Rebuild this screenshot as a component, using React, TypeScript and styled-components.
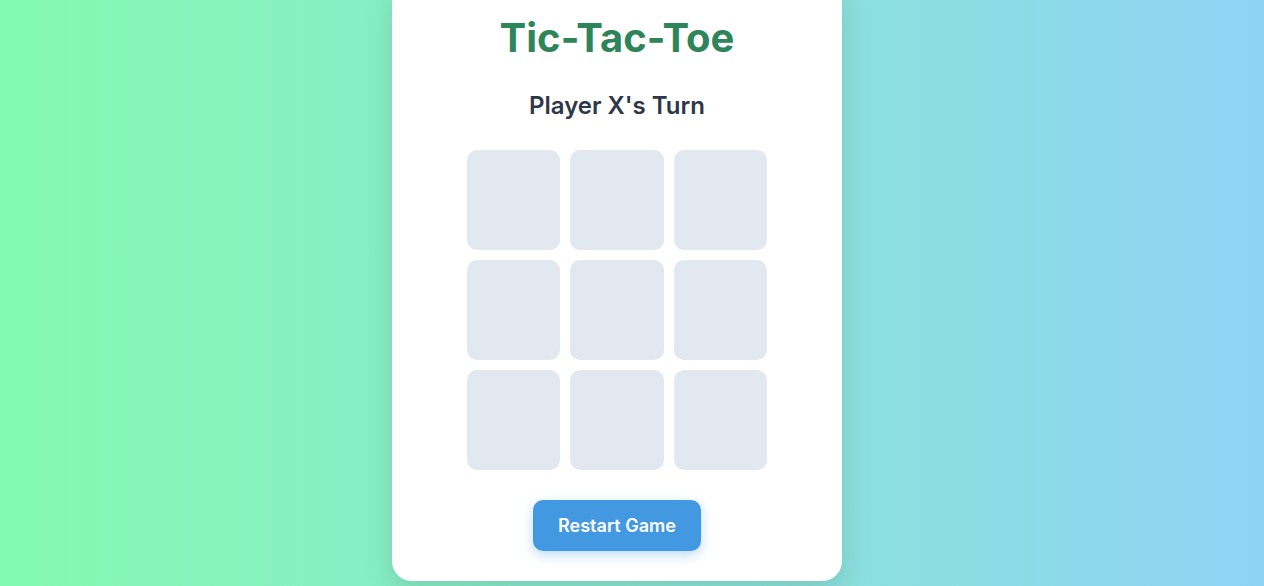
import React, { useState } from "react";
import styled, { createGlobalStyle } from "styled-components";

const GlobalStyle = createGlobalStyle`
    * {
        box-sizing: border-box;
    }

    body {
        margin: 0;
        font-family: Inter, "Noto Sans", "Liberation Sans", sans-serif;
        overflow: hidden;
    }
`;

const Page = styled.div`
    height: 100vh;
    display: flex;
    justify-content: center;
    align-items: flex-end;
    padding: 0 30px 5px 0;
    background: linear-gradient(to right, #84fab0, #8fd3f4);
`;

const Card = styled.div`
    flex-shrink: 0;
    width: 450px;
    background: #ffffff;
    border-radius: 20px;
    padding: 30px 0 30px;
    box-shadow: 0 10px 30px rgba(0, 0, 0, 0.12);
    display: flex;
    flex-direction: column;
    align-items: center;
    gap: 29px;
`;

const Title = styled.h1`
    margin: 0;
    font-size: 40px;
    line-height: 48px;
    font-weight: 700;
    color: #2f855a;
`;

const Status = styled.h2`
    margin: 0;
    font-size: 24px;
    line-height: 30px;
    font-weight: 600;
    color: #2d3748;
`;

const Board = styled.div`
    display: grid;
    grid-template-columns: repeat(3, 1fr);
    grid-auto-rows: 100px;
    gap: 10px;
    width: 300px;
`;

const Cell = styled.button<{ $mark: string | null }>`
    border: none;
    border-radius: 10px;
    background: #e2e8f0;
    font-family: inherit;
    font-size: 48px;
    font-weight: 700;
    color: ${(p) => (p.$mark === "X" ? "#e53e3e" : "#3182ce")};
    cursor: pointer;
    padding: 0;
`;

const RestartButton = styled.button`
    margin-top: 1px;
    border: none;
    border-radius: 10px;
    padding: 15px 25px;
    background: #4299e1;
    color: #ffffff;
    font-family: inherit;
    font-size: 18px;
    line-height: 21px;
    font-weight: 600;
    cursor: pointer;
    box-shadow: 0 4px 12px rgba(66, 153, 225, 0.35);
`;

export default function App() {
    const [cells, setCells] = useState<(string | null)[]>(Array(9).fill(null));
    const [xNext, setXNext] = useState(true);

    const play = (i: number) => {
        if (cells[i]) return;
        const next = cells.slice();
        next[i] = xNext ? "X" : "O";
        setCells(next);
        setXNext(!xNext);
    };

    const restart = () => {
        setCells(Array(9).fill(null));
        setXNext(true);
    };

    return (
        <>
            <GlobalStyle />
            <Page>
                <Card>
                    <Title>Tic-Tac-Toe</Title>
                    <Status>Player {xNext ? "X" : "O"}'s Turn</Status>
                    <Board>
                        {cells.map((c, i) => (
                            <Cell key={i} $mark={c} onClick={() => play(i)}>
                                {c}
                            </Cell>
                        ))}
                    </Board>
                    <RestartButton onClick={restart}>Restart Game</RestartButton>
                </Card>
            </Page>
        </>
    );
}
